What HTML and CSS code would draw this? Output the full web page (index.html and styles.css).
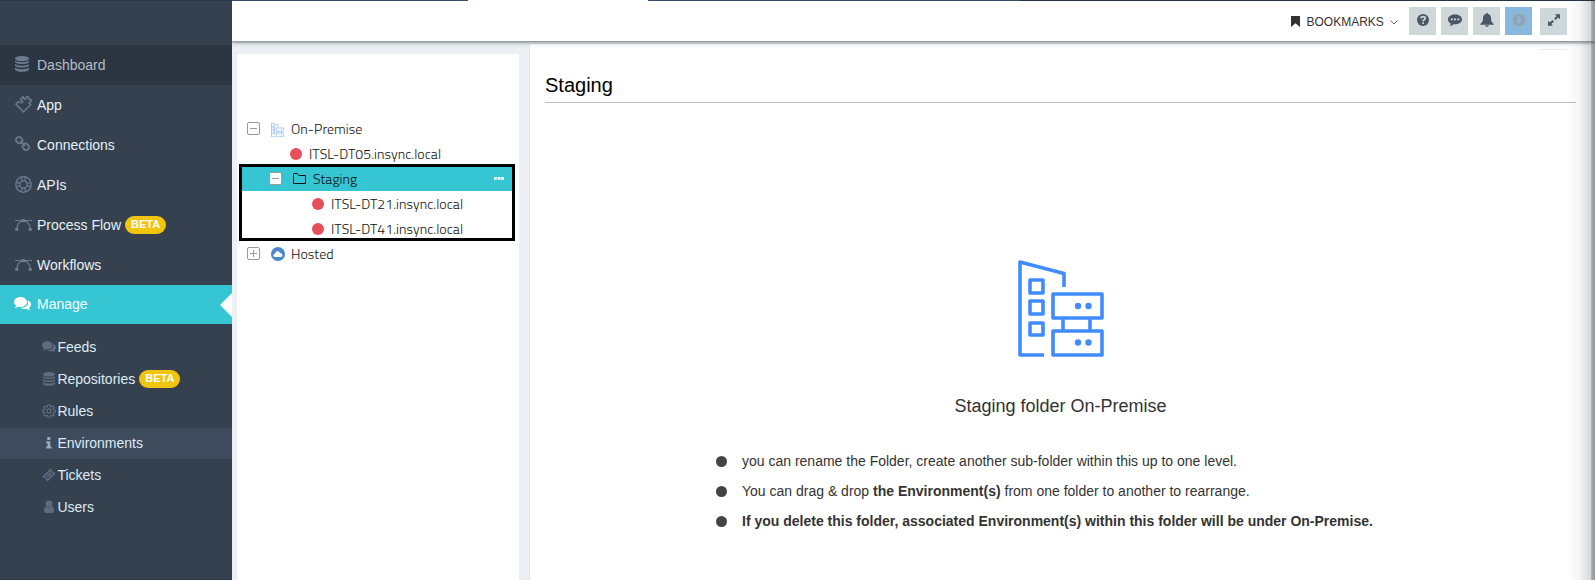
FILE: index.html
```
<!DOCTYPE html>
<html lang="en">
<head>
<meta charset="utf-8">
<title>Environments</title>
<link rel="stylesheet" href="styles.css">
</head>
<body>
<svg class="defs" width="0" height="0">
  <symbol id="db" viewBox="0 0 14 16"><ellipse cx="7" cy="2.600" rx="7" ry="2.600"/><path d="M0 4.500c2 2.300 12 2.300 14 0v1.700c-1.500 2.400-12.500 2.400-14 0zM0 8c2 2.300 12 2.300 14 0v1.700c-1.500 2.400-12.500 2.400-14 0zM0 11.500c2 2.300 12 2.300 14 0v1.900c-1.500 3.200-12.500 3.200-14 0z"/></symbol>
  <symbol id="flow" viewBox="0 0 17 12"><g fill="none" stroke="currentColor"><path d="M0 1.500h17M2 9.500C2.300 5 5 1.800 8.500 1.800S14.700 5 15 9.500" stroke-width="1.200"/></g><rect x="7" y="0" width="3" height="3"/><circle cx="1.700" cy="10.200" r="1.700"/><circle cx="15.300" cy="10.200" r="1.700"/></symbol>
  <symbol id="chat" viewBox="0 0 17 14"><path d="M6.500 0C10.100 0 13 2.200 13 5s-2.900 5-6.500 5c-.8 0-1.500-.1-2.200-.3C3.300 10.500 2 11 .7 11.100c.8-.7 1.300-1.500 1.400-2.300C.8 7.900 0 6.500 0 5c0-2.800 2.900-5 6.500-5z"/><path d="M14 3.200c1.800.9 3 2.400 3 4.200 0 1.400-.8 2.700-2 3.600.1.800.6 1.500 1.300 2.200-1.300-.1-2.500-.6-3.500-1.400-2.300.6-4.800.1-6.300-1C10.900 11 14 8.500 14 5.200z"/></symbol>
  <symbol id="building" viewBox="0 0 87 97"><g fill="none" stroke="currentColor" stroke-width="3.600" stroke-linejoin="round"><path d="M26 95H2V2l44 11.500V27"/><path d="M12 20h13v13H12zM12 41h13v13H12zM12 63h13v12H12zM35 34h49v24H35zM35 71h49v24H35zM45 58v13M72 58v13"/></g><circle cx="60" cy="46" r="3.200"/><circle cx="70.500" cy="46" r="3.200"/><circle cx="60" cy="82.500" r="3.200"/><circle cx="70.500" cy="82.500" r="3.200"/></symbol>
</svg>
<div class="app">
  <aside class="sidebar">
    <nav class="menu">
      <a class="item dim"><svg class="ico db"><use href="#db"/></svg><span>Dashboard</span></a>
      <a class="item"><svg class="ico puzzle" viewBox="0 0 17 17"><path d="M.8 8 3.800 5.600c1.200.8 2 1.700 3.300 1.100 1-.7.600-2-.6-2.200-1-.2-1.200-.9-.5-1.500L7.600 1c.7-.6 1.400.1 1.200 1-.2 1.200.9 1.800 1.700 1.200.9-.7.100-1.800 1.100-2.300 1.500-.7 2.600.5 2 1.700-.4.800.7.900 1.500.8 1.400-.1 1.700 1.600.7 2.400-.8.600-1.900.3-1.700 1.200.2.800 1.600.7 1.700 1.600L8.500 16z" fill="none" stroke="currentColor" stroke-width="1.400" stroke-linejoin="round"/></svg><span>App</span></a>
      <a class="item"><svg class="ico link" viewBox="0 0 15 15"><g fill="none" stroke="currentColor" stroke-width="1.700"><rect x="1.200" y="1" width="5.700" height="6.500" rx="2.500" transform="rotate(-45 4 4)"/><rect x="8" y="7.600" width="5.700" height="6.500" rx="2.500" transform="rotate(-45 10.900 10.900)"/><path d="M5 5l5 5"/></g></svg><span>Connections</span></a>
      <a class="item"><svg class="ico api" viewBox="0 0 17 17"><g fill="none" stroke="currentColor" stroke-width="1.200"><circle cx="8.500" cy="8.500" r="7.800"/><circle cx="8.500" cy="8.500" r="3.600"/><path d="M6.800 1v4.300M10.200 1v4.300M6.800 11.700V16M10.200 11.700V16M1 6.800h4.300M1 10.200h4.300M11.700 6.800H16M11.700 10.200H16"/></g></svg><span>APIs</span></a>
      <a class="item"><svg class="ico flow"><use href="#flow"/></svg><span>Process Flow</span><b class="badge">BETA</b></a>
      <a class="item"><svg class="ico flow"><use href="#flow"/></svg><span>Workflows</span></a>
      <a class="item active"><svg class="ico chat"><use href="#chat"/></svg><span>Manage</span></a>
    </nav>
    <nav class="submenu">
      <a class="sub"><svg class="sico"><use href="#chat"/></svg><span>Feeds</span></a>
      <a class="sub"><svg class="sico"><use href="#db"/></svg><span>Repositories</span><b class="badge">BETA</b></a>
      <a class="sub"><svg class="sico" viewBox="0 0 16 16"><g fill="none" stroke="currentColor" stroke-width="1.300" stroke-linejoin="round"><path d="M6.700 1h2.600l.4 2 .9.400L12.300 2.200l1.700 1.700-1.200 1.700.4.900 2 .3v2.500l-2 .4-.4.900 1.200 1.700-1.700 1.700-1.700-1.200-.9.400-.4 2H6.700l-.4-2-.9-.4-1.700 1.200L2 12.300l1.200-1.700-.4-.9-2-.4V6.800l2-.3.400-.9L2 3.900l1.700-1.700 1.700 1.200.9-.4z"/><circle cx="8" cy="8" r="2.400"/></g></svg><span>Rules</span></a>
      <a class="sub current"><svg class="sico" viewBox="0 0 14 14"><path d="M5.300 1h3v3h-3zM4.300 5.300h4v5.200h1.200v2H4.300v-2h1.200V7.300H4.300z"/></svg><span>Environments</span></a>
      <a class="sub"><svg class="sico" viewBox="0 0 14 14"><path fill-rule="evenodd" d="M8.600.5l1.300 1.300c-.5 1.200 1 2.700 2.200 2.200l1.400 1.400-8.100 8.100L4 12.100c.5-1.200-1-2.700-2.200-2.200L.5 8.600zM8.400 3 3 8.400 5.600 11 11 5.600zm0 1.300 1.300 1.300-4.100 4.100-1.300-1.300z"/></svg><span>Tickets</span></a>
      <a class="sub"><svg class="sico" viewBox="0 0 14 14"><circle cx="7" cy="4" r="3.400"/><path d="M4 6.500c2 1.900 4 1.900 6 0 1.500.4 2 2 2 4 0 1.500-.8 2.500-2 2.500H4c-1.200 0-2-1-2-2.500 0-2 .5-3.600 2-4z"/></svg><span>Users</span></a>
    </nav>
  </aside>
  <div class="main">
    <header class="topbar">
      <svg class="bm" viewBox="0 0 9 11"><path d="M0 0h9v11L4.500 7.200 0 11z"/></svg>
      <span class="bmtext">BOOKMARKS</span>
      <svg class="chev" viewBox="0 0 8 5"><path d="M.6.6 4 4 7.400.6" fill="none" stroke="currentColor"/></svg>
      <div class="tools">
        <span class="tool"><svg viewBox="0 0 14 14"><circle cx="7" cy="7" r="6"/><path d="M4.900 5.400C5 3.100 9.200 3 9.200 5.300 9.200 6.800 7.100 6.800 7.100 8.300M7.100 9.300v1.700" fill="none" stroke="#ced8da" stroke-width="1.700"/></svg></span>
        <span class="tool"><svg viewBox="0 0 14 14"><path d="M7 1.500c3.900 0 7 2.100 7 4.900s-3.100 4.900-7 4.900c-.6 0-1-.1-1.500-.1-1 1-2.400 1.600-4 1.700.7-.7 1.200-1.600 1.200-2.500C1 9.500 0 8.100 0 6.400c0-2.800 3.100-4.900 7-4.900z"/><path d="M2.800 5.500h2v1.800h-2zM6 5.500h2v1.800H6zM9.200 5.500h2v1.800h-2z" fill="#ced8da"/></svg></span>
        <span class="tool"><svg viewBox="0 0 14 14"><path d="M7 0c.6 0 1 .4 1 1 2.300.5 3 2.200 3 4.500 0 2.500 1 4.300 2.800 5.500v.8H.2V11C2 9.800 3 8 3 5.500 3 3.200 3.700 1.500 6 1c0-.6.400-1 1-1zM5.200 12.300h3.600C8.500 14.300 5.500 14.300 5.200 12.300z"/></svg></span>
        <span class="tool blue"><svg viewBox="0 0 14 14"><circle cx="7" cy="7" r="6.200"/><path d="M5.900 3.200h2.200v3.500h2.300L7 10.700 3.600 6.700h2.300z" fill="#89b8dc"/></svg></span>
        <span class="tool last"><svg viewBox="0 0 14 14"><path d="M8 1.200h5v5l-1.800-1.800-2.600 2.600-1.500-1.500 2.600-2.600zM6 12.800H1v-5l1.800 1.800L5.400 7l1.500 1.500-2.600 2.600z"/></svg></span>
      </div>
    </header>
    <div class="content">
      <section class="tree">
        <div class="row"><i class="toggle"></i><svg class="tbuild"><use href="#building"/></svg><span>On-Premise</span></div>
        <div class="row l1"><i class="dot"></i><span>ITSL-DT05.insync.local</span></div>
        <div class="group">
          <div class="row sel"><i class="toggle light"></i><svg class="folder" viewBox="0 0 13 11"><path d="M.5 10.500V1.200Q.5.500 1.200.5h3L6 2.500h6.500v8z" fill="none" stroke="currentColor"/></svg><span>Staging</span><svg class="more" viewBox="0 0 10 3"><path d="M0 0h2.800v2.800H0zM3.600 0h2.800v2.800H3.600zM7.200 0H10v2.800H7.200z"/></svg></div>
          <div class="row l2"><i class="dot"></i><span>ITSL-DT21.insync.local</span></div>
          <div class="row l2"><i class="dot"></i><span>ITSL-DT41.insync.local</span></div>
        </div>
        <div class="row"><i class="toggle plus"></i><svg class="cloud" viewBox="0 0 14 14"><circle cx="7" cy="7" r="7" fill="#4a86cc"/><path d="M4.300 10C1.800 10 1.800 7 4 6.700 4.300 3.700 8.300 3.500 8.900 6c2.900-.3 3.400 4 .6 4z" fill="#fff"/></svg><span>Hosted</span></div>
      </section>
      <section class="panel">
        <div class="stub"></div>
        <h1>Staging</h1>
        <svg class="hero"><use href="#building"/></svg>
        <h2>Staging folder On-Premise</h2>
        <ul>
          <li>you can rename the Folder, create another sub-folder within this up to one level.</li>
          <li>You can drag &amp; drop <b>the Environment(s)</b> from one folder to another to rearrange.</li>
          <li><b>If you delete this folder, associated Environment(s) within this folder will be under On-Premise.</b></li>
        </ul>
      </section>
    </div>
    <div class="edge"></div>
  </div>
</div>
</body>
</html>
```
FILE: styles.css
```
* { box-sizing: border-box; }
body { margin: 0; font-family: "Liberation Sans", Arial, sans-serif; font-size: 14px; color: #333; }
svg { fill: currentColor; flex: none; }
.defs { position: absolute; }
.app { display: flex; width: 1595px; height: 580px; overflow: hidden; padding-top: 1px; background: linear-gradient(to right, #2a3443 232px, #344a6b 232px, #344a6b 468px, #fff 468px, #fff 648px, #344a6b 648px, #344a6b 1020px, #263142 1020px) top / 100% 1px no-repeat; }
.sidebar { width: 232px; flex: none; background: #364150; padding-top: 44px; border-bottom: 1px solid #2d3643; }
.item { display: flex; align-items: center; height: 40px; padding-left: 15px; color: #e5f0f6; }
.item span { line-height: 20px; }
.ico { width: 17px; height: 17px; margin-right: 5px; color: #6c7b90; }
.ico.puzzle, .ico.api { margin-bottom: 2px; }
.ico.db { width: 14px; height: 16px; margin: 0 8px 2px 0; }
.ico.link { width: 15px; height: 15px; margin: 0 7px 3px 0; }
.ico.flow { height: 12px; margin-bottom: 1px; }
.ico.chat { height: 14px; color: #fff; margin: 0 6px 0 -1px; }
.item.dim { background: #2c3542; color: #b4bcc8; }
.item.active { position: relative; height: 39px; padding-bottom: 1px; background: #36c6d3; color: #f4ffff; }
.item.active::after { content: ""; position: absolute; right: 0; top: 8px; border: 12px solid transparent; border-left: 0; border-right-color: #fff; }
.badge { margin: 0 0 0 4px; height: 18px; border-radius: 9px; background: #f1c40f; color: #fff; font-size: 11px; line-height: 17px; padding: 0 6px; }
.submenu { padding-top: 8px; }
.sub { display: flex; align-items: center; height: 31px; margin-bottom: 1px; padding: 0 0 2px 42px; color: #dcebf4; }
.sico { width: 14px; height: 14px; margin-right: 1.4px; color: #606c7e; }
.current { background: #3e4b5c; }
.current .sico { color: #a0abba; }
.main { position: relative; flex: 1; display: flex; flex-direction: column; background: #eceff3; }
.topbar { position: relative; z-index: 1; height: 40px; flex: none; background: #fff; display: flex; align-items: flex-start; padding-left: 1059px; box-shadow: 0 1px 2px #8b969a, 0 2px 4px rgba(80,100,105,.5); clip-path: inset(0 0 -8px 0); }
.bm { width: 9px; height: 11px; margin-top: 15px; }
.bmtext { font-size: 12px; line-height: 20px; margin: 11px 0 0 6.500px; width: 76.500px; white-space: nowrap; }
.chev { width: 8px; height: 5px; margin: 19px 0 0 7px; color: #666; }
.tools { display: flex; gap: 5px; margin: 6px 0 0 11px; }
.tool { width: 27px; height: 28px; background: #ced8da; color: #4b5564; display: flex; justify-content: center; padding-top: 6px; }
.tool svg { width: 14px; height: 14px; }
.tool.blue { background: #89b8dc; color: #93a2ae; }
.tool.last { height: 27px; margin: 1px 0 0 3px; }
.tool.last svg { width: 14px; height: 14px; margin-top: -1px; }
.content { flex: 1; display: flex; }
.tree { width: 282px; flex: none; margin: 13px 10px 0 5px; background: #fff; padding: 62px 0 0 3px; font-family: "Titillium Web", "Open Sans", sans-serif; font-weight: 300; font-size: 14px; letter-spacing: .04px; color: #111; }
.row { height: 25px; display: flex; align-items: center; padding-left: 7px; white-space: nowrap; }
.l1 { padding-left: 50px; }
.l2 { padding-left: 70px; }
.toggle { width: 13px; height: 13px; border: 1px solid #999; border-radius: 2px; margin-right: 11px; background: linear-gradient(#999, #999) center / 7px 1px no-repeat; }
.toggle.plus { background: linear-gradient(#999, #999) center / 7px 1px no-repeat, linear-gradient(#999, #999) center / 1px 7px no-repeat; }
.toggle.light { background-color: #fff; margin: 0 11px 0 -1px; }
.tbuild { width: 13px; height: 14px; margin: 2px 7px 0 0; color: #5f9ffc; }
.cloud { width: 14px; height: 14px; margin: 1px 6px 0 0; }
.dot { width: 12px; height: 12px; border-radius: 50%; background: #e7505a; margin: 1px 7px 0 0; flex: none; }
.group { width: 276px; height: 77px; margin-top: -2px; margin-left: -1px; border: 3px solid #000; }
.sel { height: 24px; background: #36c6d3; padding: 0 0 1px 28px; }
.folder { width: 13px; height: 11px; margin-right: 7px; }
.more { width: 10px; height: 3px; color: #fff; margin-left: auto; margin-right: 8px; }
.panel { flex: 1; background: #fff; margin-top: 3px; border-left: 1px solid #e3e7ea; padding: 0 19px 0 15px; display: flex; flex-direction: column; }
.stub { width: 27px; height: 1px; background: #e8eaec; align-self: flex-end; margin: 5px 9px 0 0; }
h1 { margin: 17px 0 0; height: 36px; line-height: 36px; font-size: 20px; font-weight: 400; color: #000; border-bottom: 1px solid #bbb; }
.hero { width: 87px; height: 97px; color: #408cff; margin: 157px 0 0 473px; }
h2 { font-size: 18px; font-weight: 400; line-height: 24px; margin: 37px 0 0; text-align: center; }
ul { list-style: none; margin: 28px 0 0 171px; padding: 0; }
li { height: 30px; line-height: 30px; display: flex; align-items: center; white-space: pre; }
li::before { content: ""; width: 11px; height: 11px; border-radius: 50%; background: #444; margin-right: 15px; }
.edge { position: absolute; z-index: 2; right: 0; top: 0; bottom: 0; width: 28px; background: linear-gradient(to right, rgba(70,75,78,0), rgba(70,75,78,.06) 45%, rgba(70,75,78,.22) 84%, rgba(75,88,93,.5) 88%, rgba(75,88,93,.62)); }
```
